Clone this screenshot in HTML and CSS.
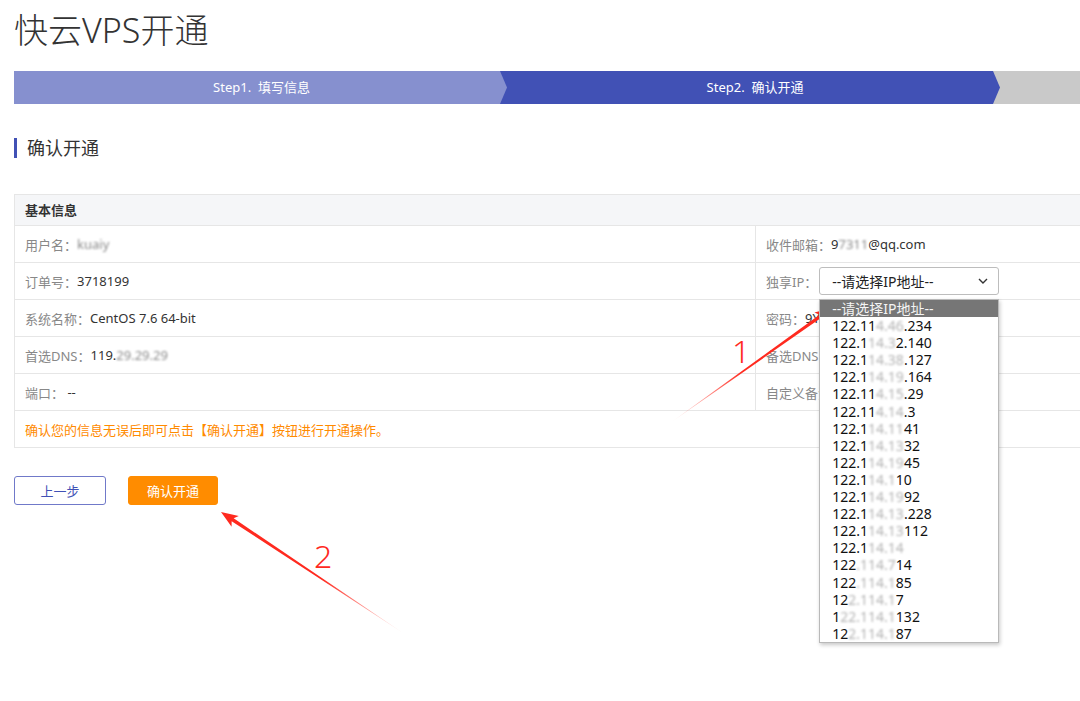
FILE: index.html
```html
<!DOCTYPE html>
<html lang="zh-CN">
<head>
<meta charset="utf-8">
<title>快云VPS开通</title>
<link rel="stylesheet" href="styles.css">
</head>
<body>
<div class="page">
  <h1 class="title">快云VPS开通</h1>

  <div class="steps">
    <div class="step step-done">Step1.&nbsp; 填写信息</div>
    <div class="step step-active">Step2.&nbsp; 确认开通</div>
    <div class="step step-next"></div>
  </div>

  <h2 class="section-title">确认开通</h2>

  <div class="info">
    <div class="info-head">基本信息</div>
    <div class="row">
      <div class="cell"><span class="lbl">用户名：</span><span class="val mask">kuaiy</span></div>
      <div class="cell"><span class="lbl">收件邮箱：</span><span class="val">9<span class="mask">7311</span>@qq.com</span></div>
    </div>
    <div class="row">
      <div class="cell"><span class="lbl">订单号：</span><span class="val">3718199</span></div>
      <div class="cell"><span class="lbl">独享IP：</span>
        <div class="select-wrap">
          <div class="select">
            <span>--请选择IP地址--</span>
            <svg class="chev" width="10" height="6" viewBox="0 0 10 6"><path d="M1 1 L5 5 L9 1" fill="none" stroke="#333" stroke-width="1.4"/></svg>
          </div>
          <ul class="dropdown">
            <li class="on">--请选择IP地址--</li>
            <li>122.11<span class="mask">4.46</span>.234</li>
            <li>122.1<span class="mask">14.3</span>2.140</li>
            <li>122.1<span class="mask">14.38</span>.127</li>
            <li>122.1<span class="mask">14.19</span>.164</li>
            <li>122.11<span class="mask">4.15</span>.29</li>
            <li>122.11<span class="mask">4.14</span>.3</li>
            <li>122.1<span class="mask">14.11</span>41</li>
            <li>122.1<span class="mask">14.13</span>32</li>
            <li>122.1<span class="mask">14.19</span>45</li>
            <li>122.1<span class="mask">14.1</span>10</li>
            <li>122.1<span class="mask">14.19</span>92</li>
            <li>122.1<span class="mask">14.13</span>.228</li>
            <li>122.1<span class="mask">14.13</span>112</li>
            <li>122.1<span class="mask">14.14</span></li>
            <li>122<span class="mask">.114.7</span>14</li>
            <li>122<span class="mask">.114.1</span>85</li>
            <li>12<span class="mask">2.114.1</span>7</li>
            <li>1<span class="mask">22.114.1</span>132</li>
            <li>12<span class="mask">2.114.1</span>87</li>
          </ul>
        </div>
      </div>
    </div>
    <div class="row">
      <div class="cell"><span class="lbl">系统名称：</span><span class="val">CentOS 7.6 64-bit</span></div>
      <div class="cell"><span class="lbl">密码：</span><span class="val">9Y</span></div>
    </div>
    <div class="row">
      <div class="cell"><span class="lbl">首选DNS：</span><span class="val">119.<span class="mask">29.29.29</span></span></div>
      <div class="cell"><span class="lbl">备选DNS</span></div>
    </div>
    <div class="row">
      <div class="cell"><span class="lbl">端口：</span><span class="val">&nbsp;--</span></div>
      <div class="cell"><span class="lbl">自定义备注</span></div>
    </div>
    <div class="row row-notice">
      <div class="cell notice">确认您的信息无误后即可点击【确认开通】按钮进行开通操作。</div>
    </div>
  </div>

  <div class="actions">
    <button class="btn btn-prev" type="button">上一步</button>
    <button class="btn btn-confirm" type="button">确认开通</button>
  </div>
</div>

<svg class="annot" width="1080" height="701" viewBox="0 0 1080 701">
  <defs>
    <linearGradient id="fade1" gradientUnits="userSpaceOnUse" x1="-196" y1="0" x2="-110" y2="0">
      <stop offset="0" stop-color="#ff2a1f" stop-opacity="0.05"/>
      <stop offset="1" stop-color="#ff2a1f" stop-opacity="1"/>
    </linearGradient>
    <linearGradient id="fade2" gradientUnits="userSpaceOnUse" x1="-219" y1="0" x2="-120" y2="0">
      <stop offset="0" stop-color="#ff2a1f" stop-opacity="0.05"/>
      <stop offset="1" stop-color="#ff2a1f" stop-opacity="1"/>
    </linearGradient>
  </defs>
  <g transform="translate(832 308) rotate(-35.4)">
    <polygon points="-196,0 -14,-1.8 -17,-6.5 0,0 -17,6.5 -14,1.8" fill="url(#fade1)"/>
  </g>
  <g transform="translate(221 512) rotate(-146.4)">
    <polygon points="-219,0 -14,-1.8 -17,-6.5 0,0 -17,6.5 -14,1.8" fill="url(#fade2)"/>
  </g>
  <text class="num" x="732" y="363">1</text>
  <text class="num" x="314" y="568">2</text>
</svg>
</body>
</html>
```

FILE: styles.css
```css
html, body {
  margin: 0;
  padding: 0;
}

body {
  width: 1080px;
  height: 701px;
  overflow: hidden;
  position: relative;
  background: #fff;
  color: #333;
  font-family: "Noto Sans", "Noto Sans CJK SC", sans-serif;
  font-size: 13px;
}

.page {
  padding-left: 14px;
  width: 1100px;
}

.title {
  margin: 0;
  padding-top: 13px;
  height: 34px;
  margin-bottom: 24px;
  font-size: 34px;
  line-height: 34px;
  font-weight: 300;
  color: #333;
  padding-left: 0;
}

.steps {
  display: flex;
  height: 33px;
  background: #c9c9c9;
  width: 1080px;
}

.step {
  height: 33px;
  line-height: 33px;
  color: #fff;
  font-size: 13px;
  text-align: center;
  position: relative;
}

.step-done {
  width: 493px;
  padding-left: 2px;
  box-sizing: border-box;
  background: #8690cf;
  clip-path: polygon(0 0, calc(100% - 7px) 0, 100% 50%, calc(100% - 7px) 100%, 0 100%);
  margin-right: -7px;
  z-index: 2;
}

.step-active {
  width: 500px;
  padding-left: 10px;
  box-sizing: border-box;
  background: #4151b5;
  clip-path: polygon(0 0, calc(100% - 7px) 0, 100% 50%, calc(100% - 7px) 100%, 0 100%);
  margin-right: -7px;
  z-index: 1;
}

.step-next {
  flex: 1;
}

.section-title {
  margin: 34px 0 36px 0;
  height: 20px;
  line-height: 20px;
  border-left: 3px solid #4151b5;
  padding-left: 10px;
  font-size: 18px;
  font-weight: normal;
  color: #333;
}

.info {
  width: 1080px;
  border: 1px solid #e6e6e6;
}

.info-head {
  height: 30px;
  line-height: 30px;
  padding: 0 10px;
  background: #f5f6f8;
  font-weight: bold;
  color: #333;
  border-bottom: 1px solid #e6e6e6;
}

.row {
  display: grid;
  grid-template-columns: 740px 1fr;
  height: 36px;
  border-bottom: 1px solid #e6e6e6;
}

.row:last-child {
  border-bottom: none;
}

.row-notice {
  grid-template-columns: 1fr;
}

.cell {
  display: flex;
  align-items: center;
  padding: 0 10px;
  white-space: nowrap;
}

.cell + .cell {
  border-left: 1px solid #e6e6e6;
}

.lbl {
  color: #888;
}

.val {
  color: #333;
}

.mask {
  color: #8a8a8a;
  filter: blur(1.3px);
}

.notice {
  color: #ff8a00;
}

.select-wrap {
  position: relative;
  margin-left: 2px;
}

.select {
  box-sizing: border-box;
  width: 180px;
  height: 28px;
  border: 1px solid #bdbdbd;
  border-radius: 3px;
  padding: 0 10px 0 12px;
  display: flex;
  align-items: center;
  justify-content: space-between;
  font-size: 14px;
  color: #222;
  background: #fff;
}

.dropdown {
  position: absolute;
  top: 32px;
  left: 0;
  width: 180px;
  box-sizing: border-box;
  margin: 0;
  padding: 0;
  list-style: none;
  background: #fff;
  border: 1px solid #b9b9b9;
  box-shadow: 1px 2px 4px rgba(0, 0, 0, 0.22);
  z-index: 10;
}

.dropdown li {
  height: 17.1px;
  line-height: 17.1px;
  padding-left: 12px;
  font-size: 14px;
  color: #111;
  white-space: nowrap;
}

.dropdown li.on {
  background: #767676;
  color: #f4f4f4;
}

.dropdown .mask {
  color: #b4b4b4;
}

.actions {
  display: flex;
  gap: 22px;
  margin-top: 28px;
}

.btn {
  box-sizing: border-box;
  height: 29px;
  border-radius: 3px;
  font-family: "Noto Sans", "Noto Sans CJK SC", sans-serif;
  font-size: 13px;
  padding: 0;
  cursor: pointer;
}

.btn-prev {
  width: 92px;
  background: #fff;
  border: 1px solid #7079c9;
  color: #4151b5;
}

.btn-confirm {
  width: 90px;
  background: #ff8c00;
  border: 1px solid #ff8c00;
  color: #fff;
}

.annot {
  position: absolute;
  top: 0;
  left: 0;
  pointer-events: none;
}

.num {
  font-family: "Noto Sans", sans-serif;
  font-weight: 300;
  font-size: 32px;
  fill: #ff2a1f;
}
```
